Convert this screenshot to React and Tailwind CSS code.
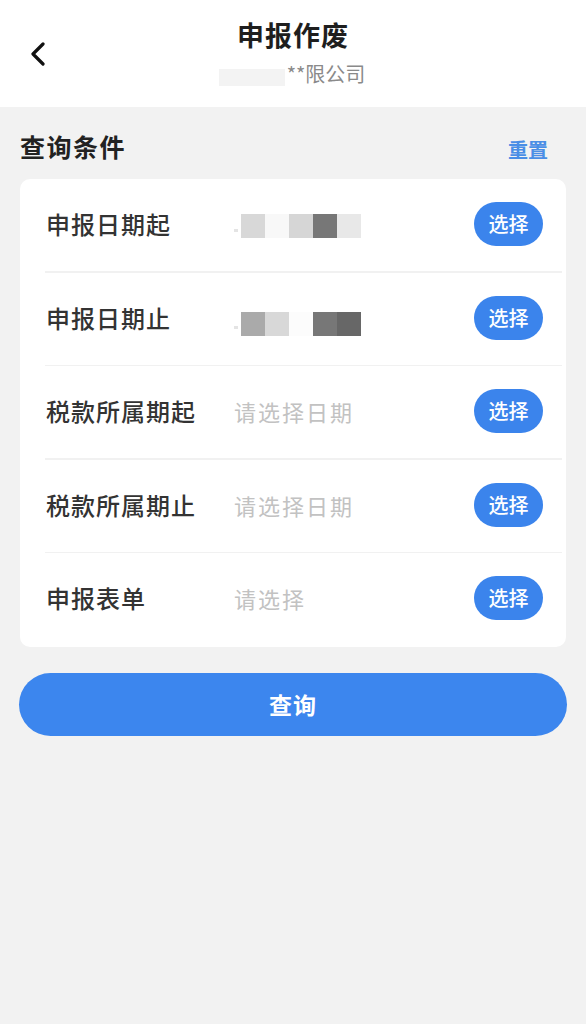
import React from "react";

const font = { fontFamily: '"Noto Sans CJK SC", "Noto Sans", sans-serif' };

function Blur({ colors }) {
  return (
    <div className="flex items-center mt-1">
      <div className="w-[4px] h-[3px] bg-[#e4e4e4] mr-[3px] mt-[8px]" />
      {colors.map((c, i) => (
        <div key={i} className="w-[24px] h-[24px]" style={{ backgroundColor: c }} />
      ))}
    </div>
  );
}

function Row({ label, children, last }) {
  return (
    <div className="relative h-[93.5px] flex items-center pl-[26px] pr-[23px] pb-[3px]">
      <div className="w-[188px] text-[24px] font-medium text-[#333333] tracking-[1px] leading-none">{label}</div>
      <div className="flex-1 flex items-center">{children}</div>
      <button className="w-[69px] h-[44px] rounded-full bg-[#3b84ec] text-white text-[20px] font-medium leading-none flex items-center justify-center">
        选择
      </button>
      {!last && <div className="absolute left-[25px] right-[4px] bottom-0 h-[1.5px] bg-[#f1f1f1]" />}
    </div>
  );
}

function Placeholder({ children }) {
  return <span className="text-[22px] text-[#c2c2c2] tracking-[2px] leading-none">{children}</span>;
}

export default function App() {
  return (
    <div className="w-[586px] h-[1024px] bg-[#f2f2f2]" style={font}>
      <div className="relative h-[107px] bg-white flex flex-col items-center">
        <div className="absolute left-[29px] top-[42px]">
          <svg width="18" height="24" viewBox="0 0 18 24">
            <path d="M14 2 L4 12 L14 22" fill="none" stroke="#111" strokeWidth="3.2" strokeLinecap="round" strokeLinejoin="round" />
          </svg>
        </div>
        <div className="mt-[21px] text-[27px] font-bold text-[#1e1e1e] leading-none tracking-[1px]">申报作废</div>
        <div className="mt-[13px] flex items-center ml-[-2px]">
          <div className="w-[66px] h-[17px] bg-[#f3f3f3] mt-[8px] mr-[2px]" />
          <span className="text-[20px] text-[#8a8a8a] leading-none">**限公司</span>
        </div>
      </div>

      <div className="px-[20px] pt-[25px] flex items-center justify-between">
        <div className="text-[25px] font-bold text-[#222] leading-none tracking-[1.5px]">查询条件</div>
        <div className="text-[20px] text-[#4a8ee6] font-bold leading-none mr-[18px] mt-[8px]">重置</div>
      </div>

      <div className="mx-[20px] mt-[19px] bg-white rounded-[10px]">
        <Row label="申报日期起">
          <Blur colors={["#d8d8d8", "#f8f8f8", "#d6d6d6", "#777777", "#e8e8e8"]} />
        </Row>
        <Row label="申报日期止">
          <div className="mt-[8px]">
            <Blur colors={["#aaaaaa", "#d8d8d8", "#fcfcfc", "#777777", "#676767"]} />
          </div>
        </Row>
        <Row label="税款所属期起">
          <Placeholder>请选择日期</Placeholder>
        </Row>
        <Row label="税款所属期止">
          <Placeholder>请选择日期</Placeholder>
        </Row>
        <Row label="申报表单" last>
          <Placeholder>请选择</Placeholder>
        </Row>
      </div>

      <div className="px-[19px] mt-[26px]">
        <button className="w-full h-[63px] rounded-full bg-[#3c86ee] text-white text-[23px] font-bold leading-none tracking-[1px] flex items-center justify-center">
          查询
        </button>
      </div>
    </div>
  );
}
